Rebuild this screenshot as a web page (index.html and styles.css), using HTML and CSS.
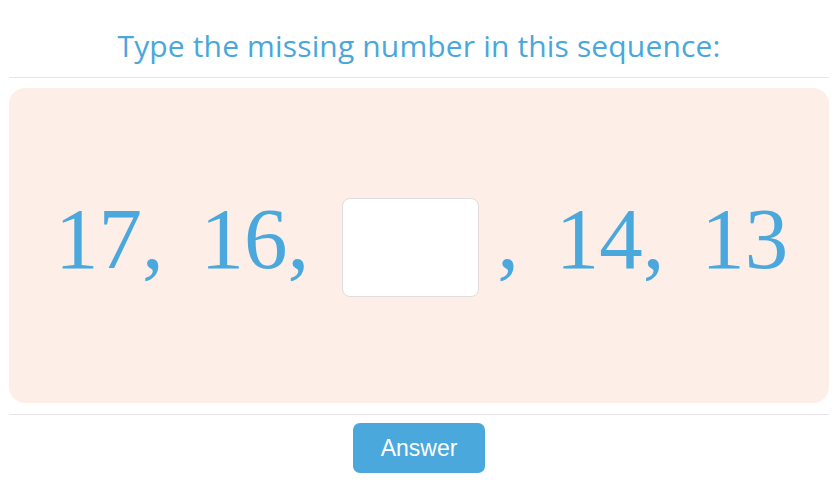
FILE: index.html
```html
<!DOCTYPE html>
<html>
<head>
<meta charset="utf-8">
<link rel="stylesheet" href="styles.css">
</head>
<body>
<div class="page">
  <h1 class="title">Type the missing number in this sequence:</h1>
  <div class="panel">
    <div class="sequence">
      <span class="num">17, 16,</span>
      <input class="blank" type="text" aria-label="missing number">
      <span class="num">, 14, 13</span>
    </div>
  </div>
  <div class="actions">
    <button class="answer">Answer</button>
  </div>
</div>
</body>
</html>
```

FILE: styles.css
```css
html, body {
  margin: 0;
  padding: 0;
  background: #ffffff;
}
.page {
  width: 820px;
  margin-left: 9px;
  display: flex;
  flex-direction: column;
}
.title {
  margin: 0;
  height: 78px;
  padding-top: 26px;
  box-sizing: border-box;
  border-bottom: 1px solid #e6e6e6;
  text-align: center;
  font-family: "Open Sans", "Lato", sans-serif;
  font-weight: 400;
  font-size: 30px;
  line-height: 40px;
  color: #4aa7dc;
  letter-spacing: 0.15px;
}
.panel {
  margin-top: 10px;
  height: 315px;
  background: #fdeee7;
  border-radius: 16px;
  display: flex;
  align-items: center;
  justify-content: center;
}
.sequence {
  display: flex;
  align-items: center;
  font-family: "Liberation Serif", "Times New Roman", serif;
  font-size: 87px;
  color: #4aa8dc;
  white-space: pre;
  word-spacing: 15px;
  margin-top: 4px;
  padding-left: 5px;
}
.num {
  line-height: 100px;
  margin-top: -18px;
}
.blank {
  width: 137px;
  height: 99px;
  box-sizing: border-box;
  margin: 0 18px 0 33px;
  border: 1px solid #e2dcdc;
  border-radius: 8px;
  background: #ffffff;
  outline: none;
}
.actions {
  margin-top: 11px;
  border-top: 1px solid #e6e6e6;
  display: flex;
  justify-content: center;
  padding-top: 8px;
}
.answer {
  width: 132px;
  height: 50px;
  border: none;
  border-radius: 7px;
  background: #4aa8dc;
  color: #ffffff;
  font-family: "Liberation Sans", Arial, sans-serif;
  font-size: 23px;
  padding: 0;
}
```
